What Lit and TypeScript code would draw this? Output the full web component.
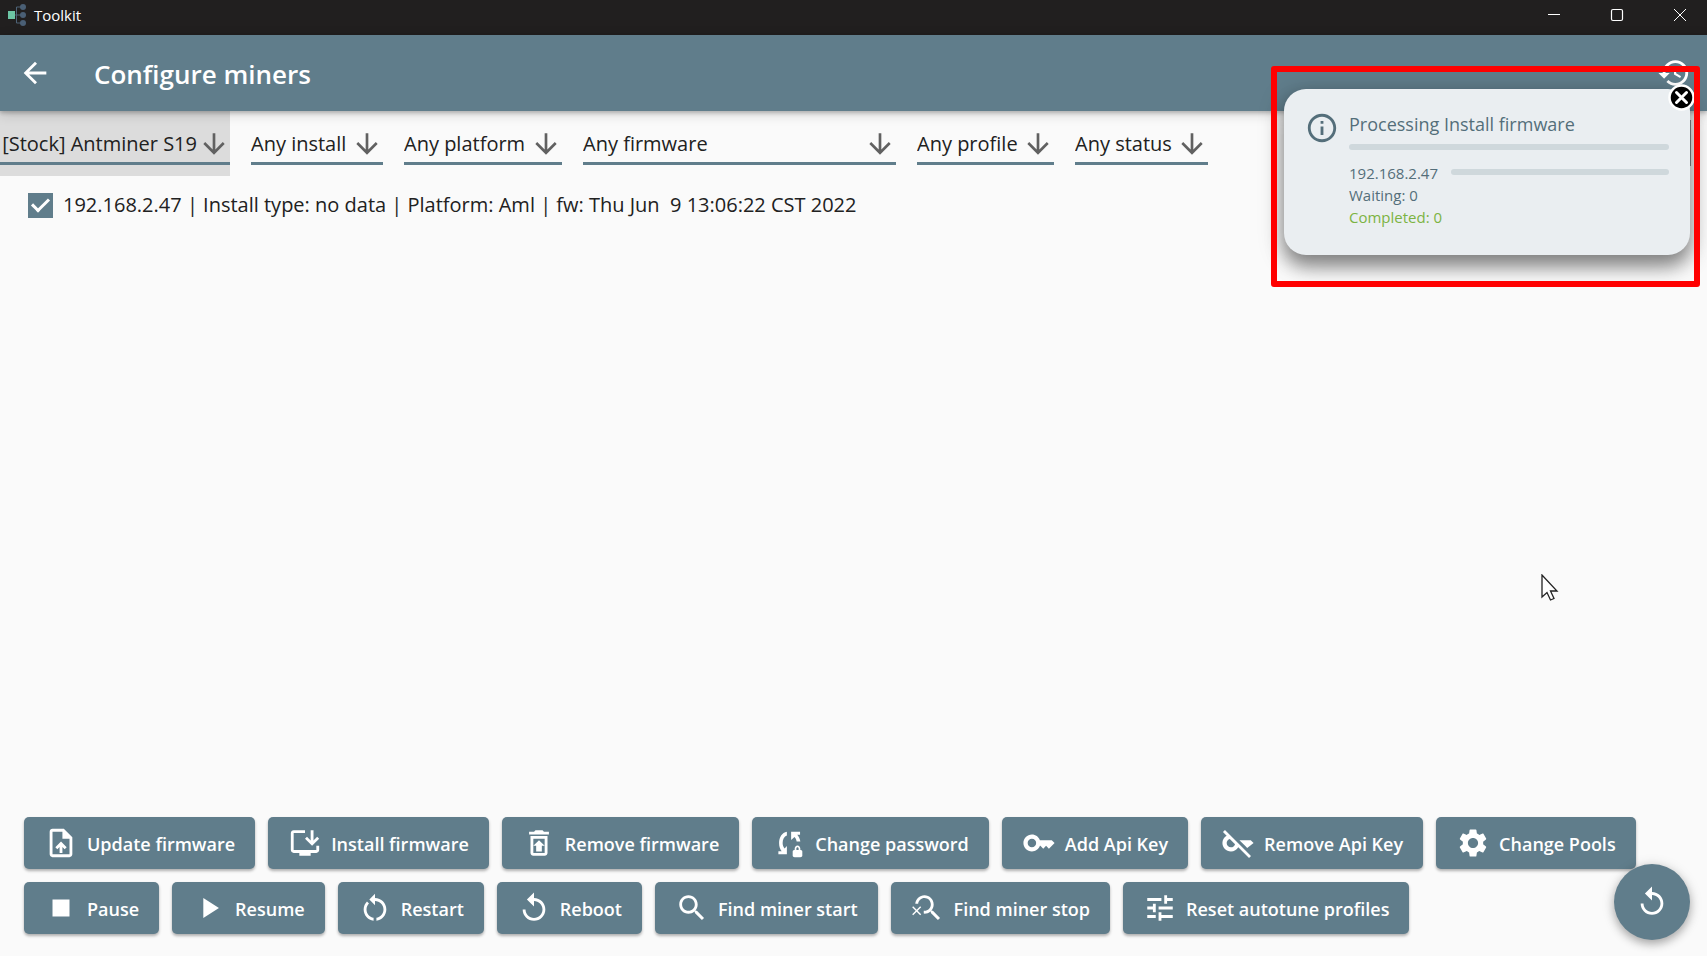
import { LitElement, html, css, svg } from "lit";
import { customElement } from "lit/decorators.js";

const ICONS: Record<string, string> = {
  back: "M20 11H7.83l5.59-5.59L12 4l-8 8 8 8 1.41-1.41L7.83 13H20v-2z",
  down: "M20 12l-1.41-1.41L13 16.17V4h-2v12.17l-5.58-5.59L4 12l8 8 8-8z",
  history:
    "M13 3c-4.97 0-9 4.03-9 9H1l3.89 3.89.07.14L9 12H6c0-3.87 3.13-7 7-7s7 3.13 7 7-3.13 7-7 7c-1.93 0-3.68-.79-4.94-2.06l-1.42 1.42C8.27 19.99 10.51 21 13 21c4.97 0 9-4.03 9-9s-4.03-9-9-9zm-1 5v5l4.28 2.54.72-1.21-3.5-2.08V8H12z",
  info: "M11 7h2v2h-2zm0 4h2v6h-2zm1-9C6.48 2 2 6.48 2 12s4.48 10 10 10 10-4.48 10-10S17.52 2 12 2zm0 18c-4.41 0-8-3.59-8-8s3.59-8 8-8 8 3.59 8 8-3.59 8-8 8z",
  upload:
    "M14 2H6C4.9 2 4 2.9 4 4v16c0 1.1.89 2 1.99 2H18c1.1 0 2-.9 2-2V8l-6-6zm4 18H6V4h7v5h5v11zM8 15.01l1.41 1.41L11 14.84V19h2v-4.16l1.59 1.59L16 15.01 12.01 11 8 15.01z",
  install:
    "M20 17H4V5h8V3H4c-1.11 0-2 .89-2 2v12c0 1.1.89 2 2 2h4v2h8v-2h4c1.1 0 2-.9 2-2v-3h-2v3zM17 14l5-5-1.41-1.41L18 10.17V3h-2v7.17l-2.59-2.58L12 9z",
  trash:
    "M19 4h-3.5l-1-1h-5l-1 1H5v2h14V4zM6 7v12c0 1.1.9 2 2 2h8c1.1 0 2-.9 2-2V7H6zm10 12H8V9h8v10zm-6-1h4v-4h2l-4-4-4 4h2v4z",
  synclock:
    "M10.5 4v2.7C8.6 7.3 7.5 9.4 7.5 12c0 1.6.5 2.9 1.400 3.800L10.500 14.200V20H4.500v-2.200h2.300C5.600 16.400 5 14.300 5 12c0-4.200 2.100-7.300 5.500-8zM13.500 4h6.300v2.200h-2c1.200 1.300 2 3 2.200 4.800h-2.600c-.2-1.300-.7-2.400-1.500-3.200L13.500 9.800zM20 17v-1c0-1.300-.9-2.300-2-2.300s-2 1-2 2.300v1c-.8 0-1.400.45-1.400 1v3c0 .55.6 1 1.400 1h4c.8 0 1.400-.45 1.400-1v-3c0-.55-.6-1-1.400-1zm-1.200 0h-1.600v-1c0-.55.35-1 .8-1s.8.45.8 1v1z",
  key: "M21 10h-8.35C11.83 7.67 9.61 6 7 6c-3.31 0-6 2.69-6 6s2.69 6 6 6c2.61 0 4.83-1.67 5.65-4H13l2 2 2-2 2 2 4-4.04L21 10zM7 15c-1.65 0-3-1.35-3-3s1.35-3 3-3 3 1.35 3 3-1.35 3-3 3z",
  keyoff:
    "M2.81 2.81L1.39 4.22l2.59 2.59C2.2 7.85 1 9.79 1 12c0 3.31 2.69 6 6 6 2.22 0 4.15-1.2 5.18-2.99l7.59 7.59 1.41-1.41L2.81 2.81zM7 15c-1.65 0-3-1.35-3-3 0-1.4.96-2.5 2.2-2.9l3.7 3.7C9.6 14.1 8.4 15 7 15zM17 14l1.5 1.5L23 12l-2-2h-8l4 4z",
  settings:
    "M19.14 12.94c.04-.3.06-.61.06-.94 0-.32-.02-.64-.07-.94l2.03-1.58c.18-.14.23-.41.12-.61l-1.92-3.32c-.12-.22-.37-.29-.59-.22l-2.39.96c-.5-.38-1.03-.7-1.62-.94l-.36-2.54c-.04-.24-.24-.41-.48-.41h-3.84c-.24 0-.43.17-.47.41l-.36 2.54c-.59.24-1.13.57-1.62.94l-2.39-.96c-.22-.08-.47 0-.59.22L2.74 8.87c-.12.21-.08.47.12.61l2.03 1.58c-.05.3-.09.63-.09.94s.02.64.07.94l-2.03 1.58c-.18.14-.23.41-.12.61l1.92 3.32c.12.22.37.29.59.22l2.39-.96c.5.38 1.03.7 1.62.94l.36 2.54c.05.24.24.41.48.41h3.84c.24 0 .44-.17.47-.41l.36-2.54c.59-.24 1.13-.56 1.62-.94l2.39.96c.22.08.47 0 .59-.22l1.92-3.32c.12-.22.07-.47-.12-.61l-2.01-1.58zM12 15.6c-1.98 0-3.6-1.62-3.6-3.6s1.62-3.6 3.6-3.6 3.6 1.62 3.6 3.6-1.62 3.6-3.6 3.6z",
  stop: "M6 6h12v12H6z",
  play: "M8 5v14l11-7z",
  restart:
    "M12 5V2L8 6l4 4V7c3.31 0 6 2.69 6 6 0 2.97-2.17 5.43-5 5.91v2.02c3.95-.49 7-3.85 7-7.93 0-4.42-3.58-8-8-8zM6 13c0-1.65.67-3.15 1.76-4.24L6.34 7.34C4.9 8.79 4 10.79 4 13c0 4.08 3.05 7.44 7 7.93v-2.02C8.17 18.43 6 15.97 6 13z",
  replay:
    "M12 5V1L7 6l5 5V7c3.31 0 6 2.69 6 6s-2.69 6-6 6-6-2.69-6-6H4c0 4.42 3.58 8 8 8s8-3.58 8-8-3.58-8-8-8z",
  search:
    "M15.5 14h-.79l-.28-.27C15.41 12.59 16 11.11 16 9.5 16 5.91 13.09 3 9.5 3S3 5.91 3 9.5 5.91 16 9.5 16c1.61 0 3.09-.59 4.23-1.57l.27.28v.79l5 4.99L20.49 19l-4.99-5zm-6 0C7.01 14 5 11.99 5 9.5S7.01 5 9.5 5 14 7.01 14 9.5 11.99 14 9.5 14z",
  searchoff:
    "M15.5 14h-.79l-.28-.27C15.41 12.59 16 11.11 16 9.5 16 5.91 13.09 3 9.5 3 6.08 3 3.28 5.64 3.03 9h2.02C5.3 6.75 7.18 5 9.5 5 11.99 5 14 7.01 14 9.5S11.99 14 9.5 14c-.17 0-.33-.03-.5-.05v2.02c.17.02.33.03.5.03 1.61 0 3.09-.59 4.23-1.57l.27.28v.79l5 4.99L20.49 19l-4.99-5zM6.47 10.82L4 13.29l-2.47-2.47-.71.71L3.29 14 .82 16.47l.71.71L4 14.71l2.47 2.47.71-.71L4.71 14l2.47-2.47z",
  tune: "M3 17v2h6v-2H3zM3 5v2h10V5H3zm10 16v-2h8v-2h-8v-2h-2v6h2zM7 9v2H3v2h4v2h2V9H7zm14 4v-2H11v2h10zm-6-4h2V7h4V5h-4V3h-2v6z",
};

const icon = (name: string) => svg`
  <svg class="icon" viewBox="0 0 24 24" aria-hidden="true"><path fill-rule="evenodd" d=${ICONS[name]}></path></svg>`;

const FILTERS = [
  { id: "model", label: "[Stock] Antminer S19", kind: "model" },
  { id: "install", label: "Any install", kind: "" },
  { id: "platform", label: "Any platform", kind: "" },
  { id: "firmware", label: "Any firmware", kind: "wide" },
  { id: "profile", label: "Any profile", kind: "" },
  { id: "status", label: "Any status", kind: "" },
];

const ACTIONS = [
  [
    ["upload", "Update firmware"],
    ["install", "Install firmware"],
    ["trash", "Remove firmware"],
    ["synclock", "Change password"],
    ["key", "Add Api Key"],
    ["keyoff", "Remove Api Key"],
    ["settings", "Change Pools"],
  ],
  [
    ["stop", "Pause"],
    ["play", "Resume"],
    ["restart", "Restart"],
    ["replay", "Reboot"],
    ["search", "Find miner start"],
    ["searchoff", "Find miner stop"],
    ["tune", "Reset autotune profiles"],
  ],
];

@customElement("app-root")
export class AppRoot extends LitElement {
  static styles = css`
    :host {
      display: flex;
      flex-direction: column;
      position: relative;
      min-height: 100vh;
      box-sizing: border-box;
      overflow: hidden;
      background: #fafafa;
      color: #212121;
      font-family: "Open Sans", "Noto Sans", sans-serif;
    }
    button {
      font: inherit;
      color: inherit;
      border: 0;
      padding: 0;
      background: none;
    }
    .icon {
      display: block;
      flex: none;
      width: 34px;
      height: 34px;
      fill: currentColor;
    }
    .titlebar {
      display: flex;
      align-items: center;
      height: 35px;
      padding-left: 8px;
      background: #211f1f;
      color: #fff;
      font-size: 15px;
    }
    .logo {
      width: 20px;
      height: 24px;
      margin-right: 6px;
      padding-bottom: 6px;
    }
    .name {
      flex: 1;
      line-height: 30px;
      padding-bottom: 6px;
    }
    .win {
      display: grid;
      place-items: center;
      width: 55px;
      height: 30px;
      margin: 0 0 6px 8px;
    }
    .win svg {
      width: 14px;
      height: 14px;
      fill: none;
      stroke: #fff;
    }
    .appbar {
      display: flex;
      align-items: center;
      height: 76px;
      padding: 0 16px 0 18px;
      background: #607d8b;
      color: #fff;
      box-shadow: 0 2px 4px rgba(0, 0, 0, 0.22), 0 3px 12px rgba(0, 0, 0, 0.16);
      position: relative;
      z-index: 1;
    }
    .appbar h1 {
      flex: 1;
      margin: 0 0 0 42px;
      font-size: 26px;
      line-height: 36px;
      font-weight: 600;
      padding-top: 2px;
    }
    .filters {
      display: flex;
      gap: 21px;
    }
    .filter {
      position: relative;
      padding: 16px 0 11px;
    }
    .model {
      background: #dcdcdc;
      width: 230px;
      display: flex;
      justify-content: flex-end;
    }
    .filter select {
      appearance: none;
      display: block;
      height: 38px;
      margin: 0;
      border: 0;
      border-bottom: 3px solid #607d8b;
      border-radius: 0;
      padding: 0 36px 1px 0;
      background: none;
      color: inherit;
      font: inherit;
      font-size: 20px;
      line-height: 30px;
    }
    .filter.model select {
      flex: none;
      min-width: 230px;
      padding-right: 33px;
      text-align: right;
    }
    .filter.wide select {
      width: 313px;
    }
    .filter .icon {
      position: absolute;
      right: 0;
      top: 17px;
      width: 32px;
      height: 32px;
      color: #616161;
      pointer-events: none;
    }
    .miner {
      display: flex;
      align-items: center;
      gap: 10px;
      margin: 14px 28px;
      font-size: 20px;
      line-height: 30px;
      white-space: pre;
    }
    .miner input {
      appearance: none;
      flex: none;
      display: grid;
      width: 25px;
      height: 25px;
      margin: 0;
      background: #607d8b;
    }
    .miner input:checked::before {
      content: "";
      width: 14px;
      height: 7px;
      margin: 5px 0 0 4px;
      border: solid #fff;
      border-width: 0 0 3px 3px;
      transform: rotate(-45deg);
    }
    .actions {
      display: flex;
      flex-direction: column;
      gap: 13px;
      margin-top: auto;
      padding: 0 24px 22px;
    }
    .row {
      display: flex;
      gap: 13px;
    }
    .action {
      display: flex;
      align-items: center;
      gap: 9px;
      height: 52px;
      padding: 0 20px;
      border-radius: 5px;
      background: #607d8b;
      color: #fff;
      font-size: 18px;
      font-weight: 600;
      white-space: nowrap;
      box-shadow: 0 2px 3px rgba(0, 0, 0, 0.3);
    }
    .action span {
      padding-top: 2px;
    }
    .fab {
      position: absolute;
      right: 17px;
      bottom: 16px;
      display: grid;
      place-items: center;
      width: 76px;
      height: 76px;
      border-radius: 50%;
      background: #607d8b;
      color: #fff;
      box-shadow: 0 4px 8px rgba(0, 0, 0, 0.25), 0 2px 14px rgba(0, 0, 0, 0.14);
    }
    .toast {
      position: absolute;
      z-index: 2;
      top: 89px;
      right: 17px;
      display: flex;
      gap: 10px;
      width: 406px;
      min-height: 166px;
      box-sizing: border-box;
      padding: 21px;
      border-radius: 22px;
      background: #eaeef1;
      color: #546e7a;
      font-size: 15px;
      line-height: 22px;
      box-shadow: 0 12px 18px rgba(0, 0, 0, 0.36), 0 5px 26px rgba(0, 0, 0, 0.26);
    }
    .toast .icon {
      margin-top: 1px;
    }
    .body {
      flex: 1;
    }
    .body h2 {
      margin: 0;
      font-size: 18px;
      line-height: 28px;
      font-weight: 400;
    }
    .bar {
      flex: 1;
      height: 6px;
      border-radius: 3px;
      background: #cfd8dc;
    }
    .total {
      margin: 6px 0 12px;
    }
    .job {
      display: flex;
      gap: 13px;
      line-height: 22px;
    }
    .job .bar {
      margin-top: 7px;
    }
    .done {
      color: #7cb342;
    }
    .close {
      position: absolute;
      top: -5px;
      right: -5px;
      width: 27px;
      height: 27px;
    }
    .close svg {
      display: block;
      width: 27px;
      height: 27px;
    }
    .scroll {
      position: absolute;
      top: 120px;
      right: 16px;
      width: 8px;
      height: 46px;
      background: #8b9194;
    }
    .mark {
      position: absolute;
      z-index: 3;
      top: 66px;
      right: 7px;
      width: 429px;
      height: 221px;
      box-sizing: border-box;
      border: 6px solid #ff0000;
      border-radius: 3px;
      pointer-events: none;
    }
    .cursor {
      position: absolute;
      left: 1541px;
      top: 574px;
      width: 18px;
      height: 28px;
    }
  `;

  render() {
    return html`
      <div class="titlebar">
        <svg class="logo" viewBox="0 0 20 24" aria-hidden="true">
          <path d="M6 12h10M8.500 4v16M8.500 4H14M8.500 20H14" fill="none" stroke="#4e6377" stroke-width="1"></path>
          <rect x="0" y="8" width="7" height="8" fill="#6cc5a5"></rect>
          <g fill="#4a5f75">
            <circle cx="15" cy="4" r="3"></circle>
            <circle cx="15" cy="12" r="3"></circle>
            <circle cx="15" cy="20" r="3"></circle>
          </g>
        </svg>
        <span class="name">Toolkit</span>
        <button class="win" aria-label="Minimize"><svg viewBox="0 0 14 14"><path d="M1 6.500h12"></path></svg></button>
        <button class="win" aria-label="Maximize">
          <svg viewBox="0 0 14 14"><rect x="1.500" y="1.500" width="11" height="11" rx="1.500" stroke-width="1.200"></rect></svg>
        </button>
        <button class="win" aria-label="Close"><svg viewBox="0 0 14 14"><path d="M1 1l12 12M13 1L1 13"></path></svg></button>
      </div>
      <header class="appbar">
        <button aria-label="Back">${icon("back")}</button>
        <h1>Configure miners</h1>
        <button aria-label="History">${icon("history")}</button>
      </header>
      <div class="filters">
        ${FILTERS.map(
          (f) => html`<div class="filter ${f.kind}">
            <select id=${f.id} aria-label=${f.id}>
              <option>${f.label}</option>
            </select>
            ${icon("down")}
          </div>`
        )}
      </div>
      <label class="miner"><input type="checkbox" checked /><span>192.168.2.47 | Install type: no data | Platform: Aml | fw: Thu Jun  9 13:06:22 CST 2022</span></label>
      <div class="actions">
        ${ACTIONS.map(
          (row) => html`<div class="row">
            ${row.map(([name, label]) => html`<button class="action">${icon(name)}<span>${label}</span></button>`)}
          </div>`
        )}
      </div>
      <button class="fab" aria-label="Refresh">${icon("replay")}</button>
      <div class="scroll"></div>
      <section class="toast" role="status">
        ${icon("info")}
        <div class="body">
          <h2>Processing Install firmware</h2>
          <div class="bar total"></div>
          <div class="job"><span>192.168.2.47</span><div class="bar"></div></div>
          <div>Waiting: 0</div>
          <div class="done">Completed: 0</div>
        </div>
        <button class="close" aria-label="Dismiss">
          <svg viewBox="0 0 27 27">
            <circle cx="13.500" cy="13.500" r="12" fill="#000" stroke="#fff" stroke-width="2.500"></circle>
            <path d="M8.500 8.500l10 10M18.500 8.500l-10 10" stroke="#fff" stroke-width="3" stroke-linecap="round"></path>
          </svg>
        </button>
      </section>
      <div class="mark"></div>
      <svg class="cursor" viewBox="0 0 18 28" aria-hidden="true">
        <path d="M1 1v22l5-4.500 3.500 7.500 3.500-1.500-3.500-7.500h6.500z" fill="#fff" stroke="#222" stroke-width="1.300"></path>
      </svg>
    `;
  }
}
